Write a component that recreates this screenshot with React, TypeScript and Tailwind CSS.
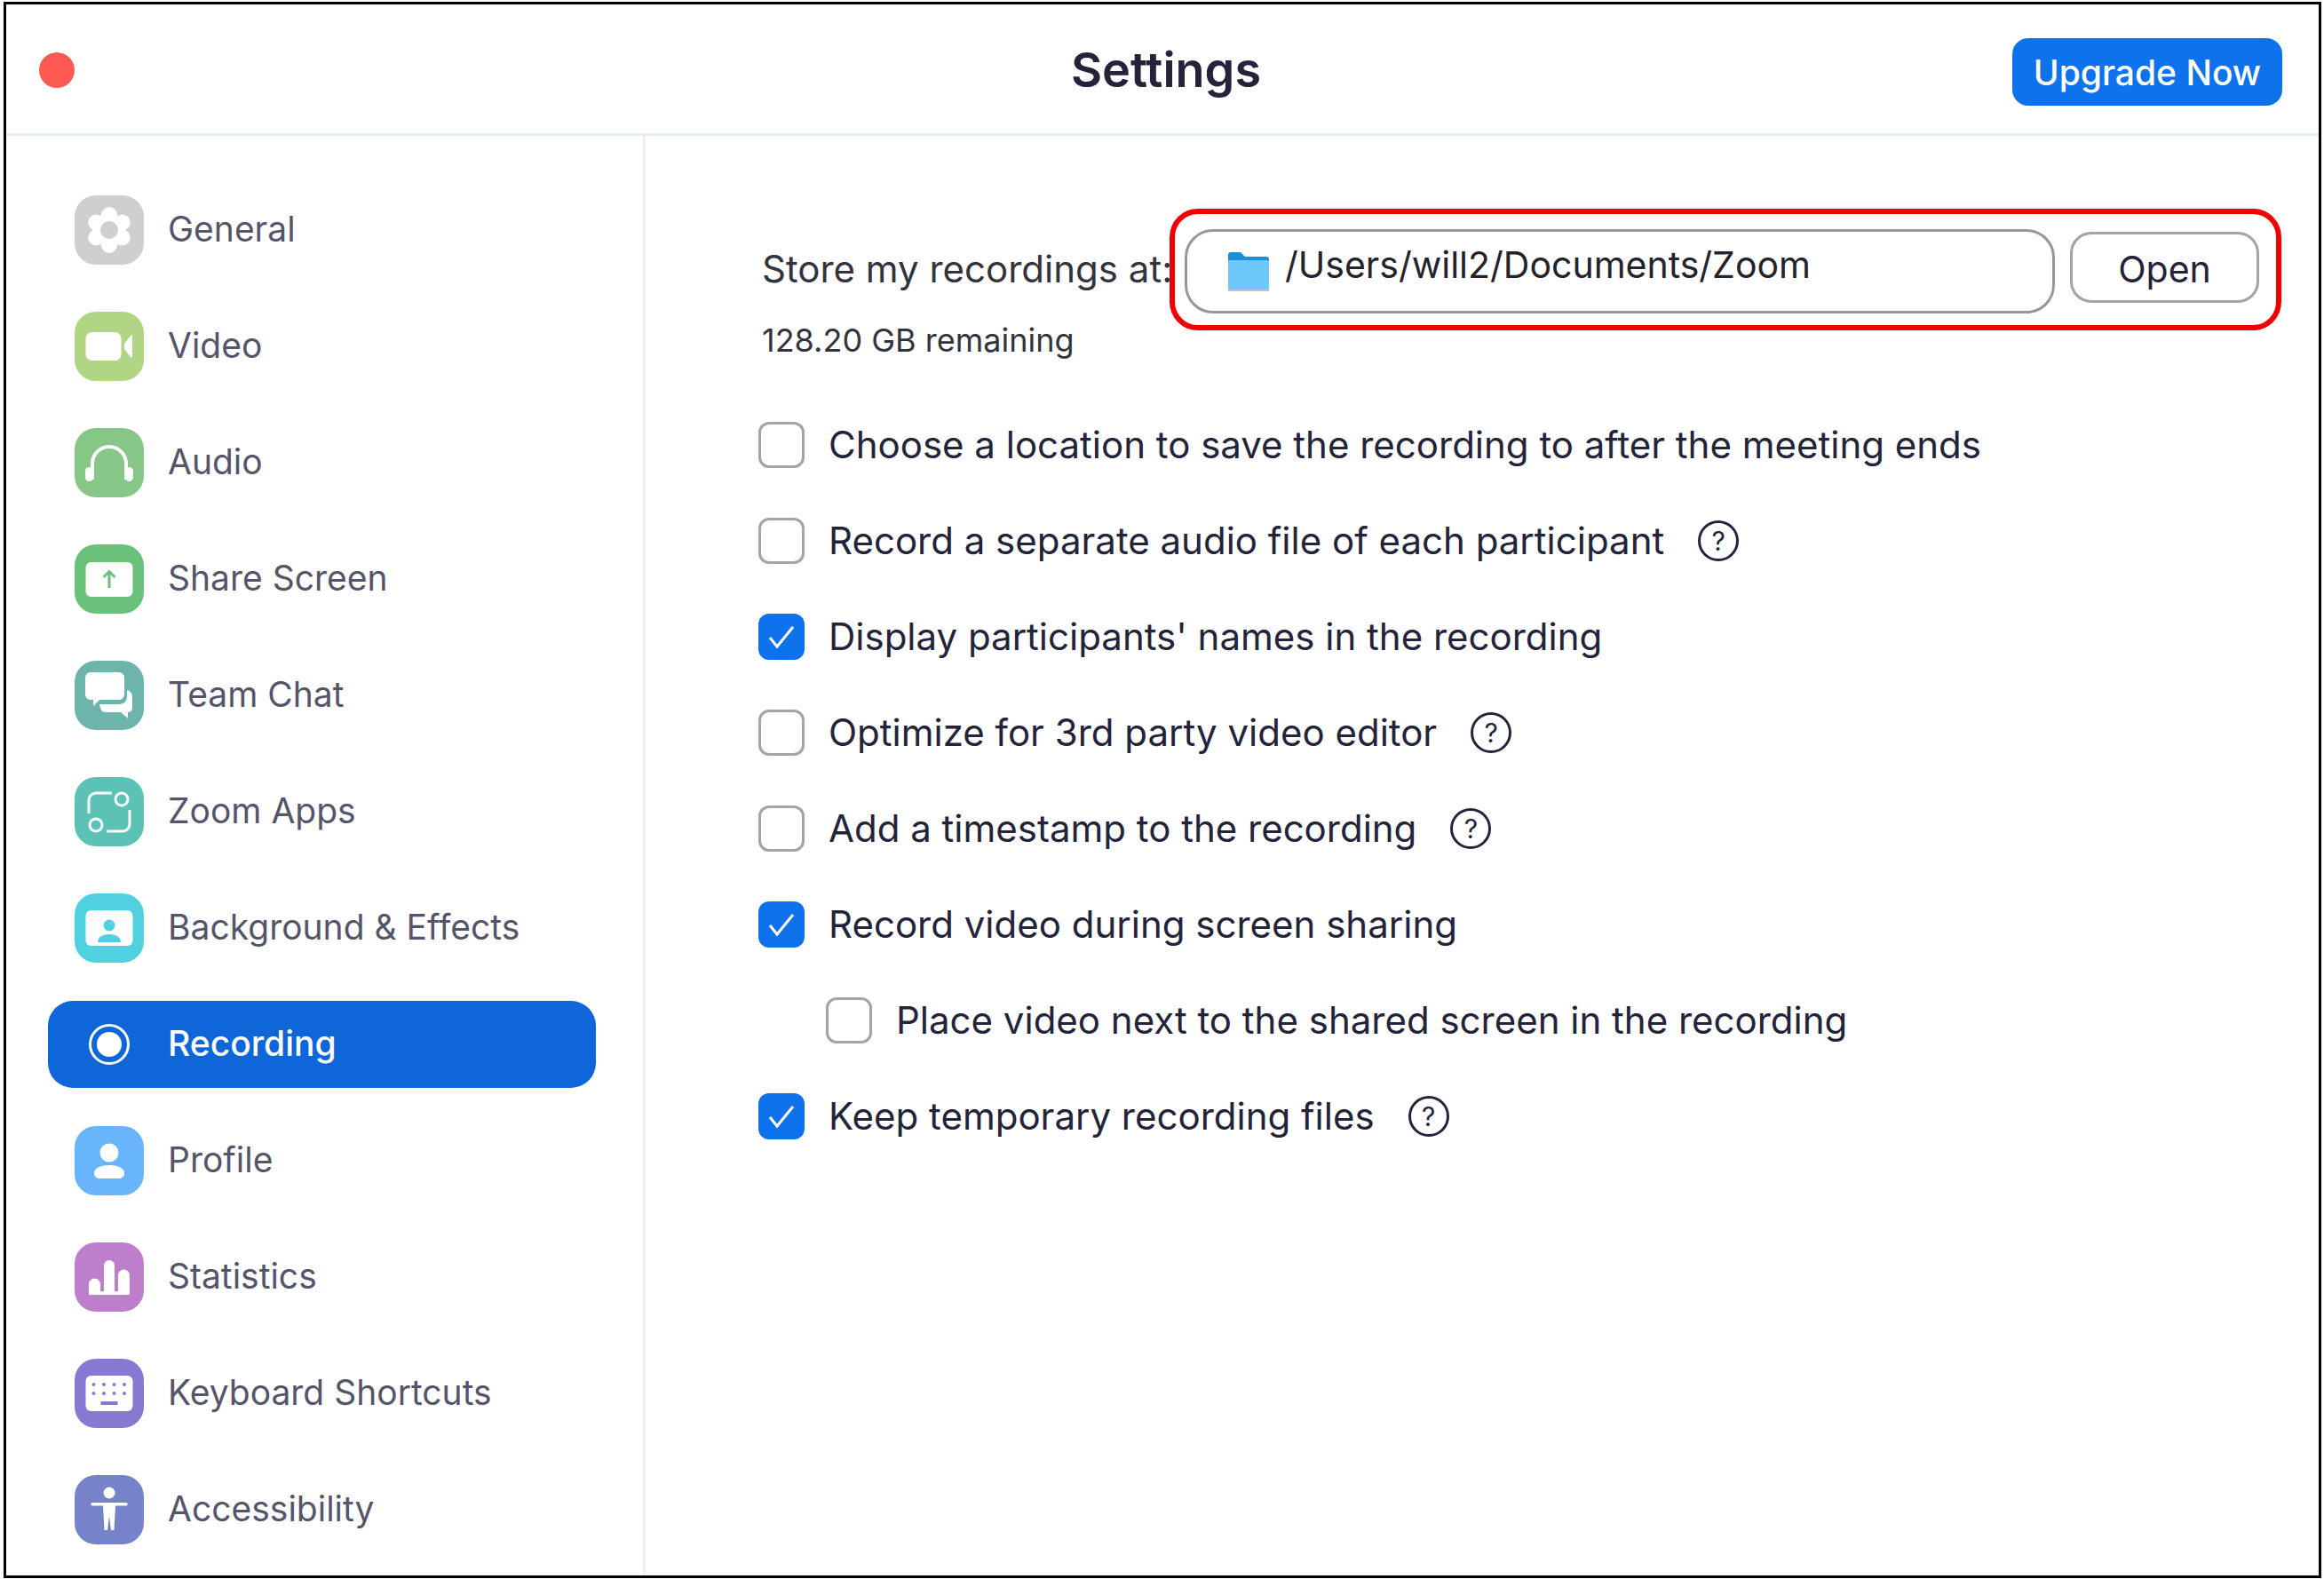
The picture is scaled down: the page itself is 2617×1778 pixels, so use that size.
import type { ReactNode } from 'react'

const W = 'white'

const sideItems: { label: string; bg: string; active?: boolean; icon: ReactNode }[] = [
  {
    label: 'General',
    bg: 'bg-[#cfcfcf]',
    icon: (
      <>
        <circle cx="39" cy="39" r="19" fill={W} />
        {[[39, 22], [39, 56], [53.7, 30.5], [53.7, 47.5], [24.3, 30.5], [24.3, 47.5]].map(([x, y]) => (
          <circle key={`${x}-${y}`} cx={x} cy={y} r="9" fill={W} />
        ))}
        <circle cx="39" cy="39" r="10" fill="#cfcfcf" />
      </>
    ),
  },
  {
    label: 'Video',
    bg: 'bg-[#afd585]',
    icon: (
      <>
        <rect x="12.5" y="23" width="40" height="32" rx="7" fill={W} />
        <path d="M56 36 L63 27 Q65 25 65 28 V50 Q65 53 63 51 L56 42 Z" fill={W} />
      </>
    ),
  },
  {
    label: 'Audio',
    bg: 'bg-[#86c787]',
    icon: (
      <>
        <path d="M20 58 V40 a19 19 0 0 1 38 0 V58" fill="none" stroke={W} strokeWidth="4" />
        <rect x="12" y="44" width="9" height="16" rx="4.5" fill={W} />
        <rect x="57" y="44" width="9" height="16" rx="4.5" fill={W} />
      </>
    ),
  },
  {
    label: 'Share Screen',
    bg: 'bg-[#6cc17a]',
    icon: (
      <>
        <rect x="12.5" y="20" width="53" height="39" rx="6" fill={W} />
        <path d="M39 49 V31 M32.5 37 L39 30.5 L45.5 37" fill="none" stroke="#6cc17a" strokeWidth="3" />
      </>
    ),
  },
  {
    label: 'Team Chat',
    bg: 'bg-[#6db5aa]',
    icon: (
      <>
        <path d="M18 13 h32 a6 6 0 0 1 6 6 v19 a6 6 0 0 1-6 6 H28 l-7 7 v-7 h-3 a6 6 0 0 1-6-6 V19 a6 6 0 0 1 6-6z" fill={W} />
        <path d="M59 33 c4 1 6 4 6 8 v12 c0 3-2 5-5 5 v7 l-8-7 H35 c-4 0-6-3-7-9 h22 c6 0 9-4 9-9 z" fill={W} />
      </>
    ),
  },
  {
    label: 'Zoom Apps',
    bg: 'bg-[#5cc2b5]',
    icon: (
      <g fill="none" stroke={W} strokeWidth="3">
        <path d="M42 18 H24 a8 8 0 0 0-8 8 V41" />
        <path d="M62 37 V53 a8 8 0 0 1-8 8 H36" />
        <circle cx="53" cy="25" r="7" />
        <circle cx="24" cy="54" r="7" />
      </g>
    ),
  },
  {
    label: 'Background & Effects',
    bg: 'bg-[#4fd1e0]',
    icon: (
      <>
        <rect x="12.5" y="19" width="53" height="40" rx="6" fill={W} />
        <circle cx="39" cy="36" r="6.5" fill="#4fd1e0" />
        <path d="M26 55 c0-6 6-9 13-9 s13 3 13 9 z" fill="#4fd1e0" />
      </>
    ),
  },
  {
    label: 'Recording',
    bg: '',
    active: true,
    icon: (
      <>
        <circle cx="39" cy="39" r="21.5" fill="none" stroke={W} strokeWidth="3" />
        <circle cx="39" cy="39" r="14" fill={W} />
      </>
    ),
  },
  {
    label: 'Profile',
    bg: 'bg-[#68b5fb]',
    icon: (
      <>
        <circle cx="39" cy="30" r="10.5" fill={W} />
        <path d="M22 53 c0-6 8-9 17-9 s17 3 17 9 c0 4-3 6-6 6 H28 c-3 0-6-2-6-6z" fill={W} />
      </>
    ),
  },
  {
    label: 'Statistics',
    bg: 'bg-[#bd7fcb]',
    icon: (
      <path
        d="M16 59 V47 a6.5 6.5 0 0 1 13 0 V55 H33 V26 a6 6 0 0 1 12 0 V55 H49 V37 a6.5 6.5 0 0 1 13 0 V59 Z"
        fill={W}
      />
    ),
  },
  {
    label: 'Keyboard Shortcuts',
    bg: 'bg-[#8579d1]',
    icon: (
      <>
        <rect x="12.5" y="19" width="53" height="40" rx="6" fill={W} />
        {[29, 39].map((y) =>
          [21.5, 33, 44.5, 56].map((x) => <circle key={`${x}-${y}`} cx={x} cy={y} r="2" fill="#8579d1" />),
        )}
        <rect x="29.5" y="48" width="19" height="4" fill="#8579d1" />
      </>
    ),
  },
  {
    label: 'Accessibility',
    bg: 'bg-[#7683c8]',
    icon: (
      <>
        <circle cx="39" cy="20" r="6.5" fill={W} />
        <path d="M20 31 H58 a1.75 1.75 0 0 1 0 3.5 H46 L44.5 62 H41 L39 46 L37 62 H33.5 L32 34.5 H20 a1.75 1.75 0 0 1 0-3.5z" fill={W} />
      </>
    ),
  },
]

const options = [
  { label: 'Choose a location to save the recording to after the meeting ends' },
  { label: 'Record a separate audio file of each participant', help: true },
  { label: "Display participants' names in the recording", checked: true },
  { label: 'Optimize for 3rd party video editor', help: true },
  { label: 'Add a timestamp to the recording', help: true },
  { label: 'Record video during screen sharing', checked: true },
  { label: 'Place video next to the shared screen in the recording', nested: true },
  { label: 'Keep temporary recording files', checked: true, help: true },
]

function Checkbox({ checked }: { checked?: boolean }) {
  if (checked) {
    return (
      <div className="w-[52px] h-[52px] shrink-0 rounded-[12px] bg-[#0e72ed]">
        <svg width="52" height="52" viewBox="0 0 52 52">
          <path d="M13 27 L21 37 L39 15" fill="none" stroke="white" strokeWidth="3" />
        </svg>
      </div>
    )
  }
  return <div className="w-[52px] h-[52px] shrink-0 rounded-[12px] border-[3px] border-[#a3a3a8] bg-white" />
}

function Help() {
  return (
    <span className="ml-[38px] w-[46px] h-[46px] shrink-0 rounded-full border-[3px] border-[#23233a] flex items-center justify-center text-[30px] leading-none text-[#23233a]">
      ?
    </span>
  )
}

function Folder() {
  return (
    <svg width="48" height="46" viewBox="0 0 48 46" className="shrink-0">
      <path d="M1 4 a3 3 0 0 1 3-3 h11 l5 5 h24 a3 3 0 0 1 3 3 v8 H1z" fill="#1c8fdc" />
      <rect x="1" y="10" width="46" height="34" rx="2" fill="#6cc8fa" />
      <rect x="1" y="43" width="46" height="2" fill="#b9c6d2" />
    </svg>
  )
}

export default function App() {
  return (
    <div className="w-[2617px] h-[1778px] bg-white pt-[2px] pl-[4px] font-['Inter',sans-serif] overflow-hidden">
      <div className="w-[2610px] h-[1775px] border-[3px] border-black flex flex-col">
        {/* Title bar */}
        <div className="h-[148px] shrink-0 pt-[2px] border-b-[3px] border-[#e8ecf4] grid grid-cols-[1fr_auto_1fr] items-center">
          <div className="pl-[37px]">
            <div className="w-[40px] h-[40px] rounded-full bg-[#ff5a52]" />
          </div>
          <div className="pl-[8px] text-[54px] font-semibold text-[#23233a]">Settings</div>
          <div className="flex justify-end pr-[41px] mt-[4px]">
            <button className="w-[304px] h-[76px] pt-[4px] rounded-[18px] bg-[#0e72ed] text-white text-[39px] font-medium">
              Upgrade Now
            </button>
          </div>
        </div>

        <div className="flex flex-1 min-h-0">
          {/* Sidebar */}
          <div className="w-[720px] shrink-0 border-r-[3px] border-[#eceef3] pt-[57px] pl-[47px] flex flex-col gap-[33px]">
            {sideItems.map((item) => (
              <div
                key={item.label}
                className={`w-[617px] h-[98px] shrink-0 pl-[30px] flex items-center gap-[27px] rounded-[28px] ${item.active ? 'bg-[#0e66d9]' : ''}`}
              >
                <div className={`w-[78px] h-[78px] shrink-0 rounded-[24px] ${item.bg}`}>
                  <svg width="78" height="78" viewBox="0 0 78 78">
                    {item.icon}
                  </svg>
                </div>
                <span className={`pb-[1px] text-[39px] ${item.active ? 'text-white font-medium' : 'text-[#55556a]'}`}>
                  {item.label}
                </span>
              </div>
            ))}
          </div>

          {/* Recording settings */}
          <div className="flex-1 pl-[131px] pt-[82px]">
            <div className="flex items-center">
              <div className="w-[459px] shrink-0 pb-[3px] whitespace-nowrap text-[42px] text-[#33333d]">
                Store my recordings at:
              </div>
              <div className="w-[1252px] h-[137px] shrink-0 border-[6px] border-[#f00000] rounded-[32px] pl-[11px] flex items-center gap-[17px]">
                <div className="w-[980px] h-[95px] mt-[4px] shrink-0 border-[3px] border-[#96969c] rounded-[32px] pl-[45px] flex items-center gap-[17px]">
                  <Folder />
                  <span className="pb-[13px] text-[41px] text-[#23232b]">/Users/will2/Documents/Zoom</span>
                </div>
                <button className="w-[213px] h-[80px] -mt-[6px] shrink-0 border-[3px] border-[#a3a3a8] rounded-[24px] pt-[6px] text-[41px] text-[#23233a]">
                  Open
                </button>
              </div>
            </div>
            <div className="-mt-[11px] h-[44px] leading-[44px] text-[36px] text-[#33333d]">128.20 GB remaining</div>

            <div className="mt-[70px] -ml-[4px] flex flex-col gap-[56px]">
              {options.map((o) => (
                <div key={o.label} className={`h-[52px] flex items-center gap-[27px] ${o.nested ? 'pl-[76px]' : ''}`}>
                  <Checkbox checked={o.checked} />
                  <div className="flex items-center">
                    <span className="pb-[1px] text-[42px] text-[#23233a] whitespace-nowrap">{o.label}</span>
                    {o.help && <Help />}
                  </div>
                </div>
              ))}
            </div>
          </div>
        </div>
      </div>
    </div>
  )
}
